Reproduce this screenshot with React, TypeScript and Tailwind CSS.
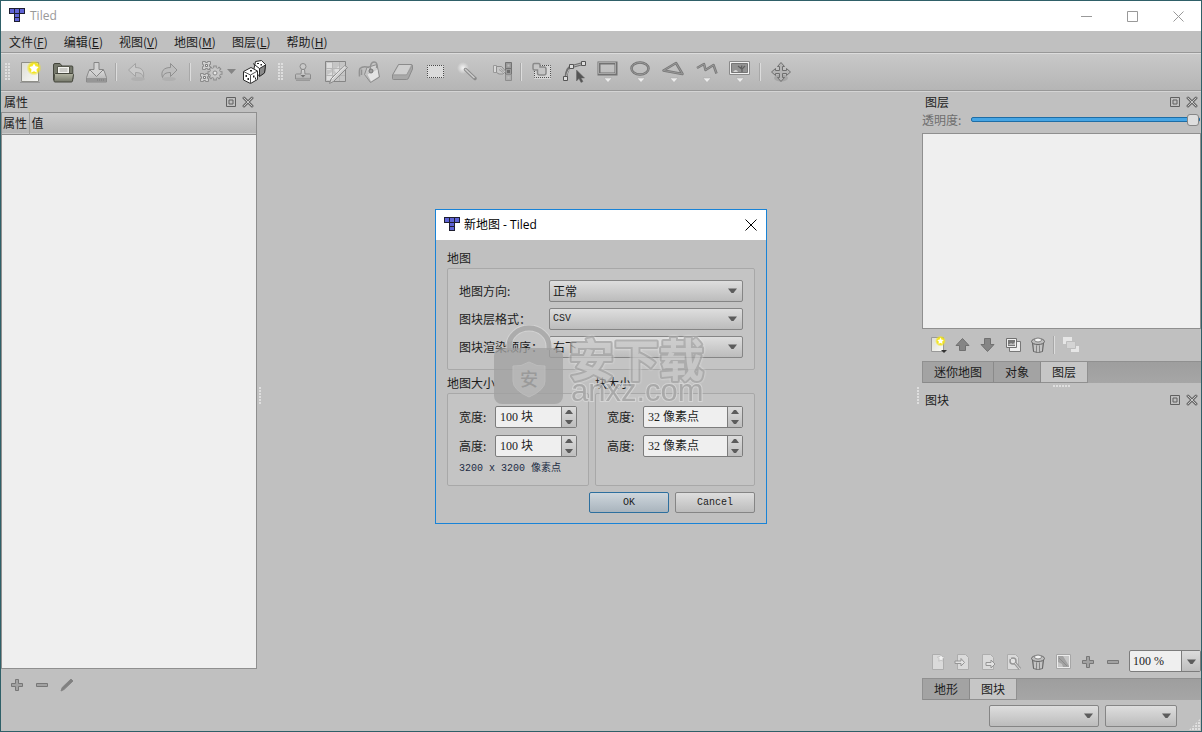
import React from "react";

type IconProps = { children: React.ReactNode; size?: "lg" | "sm" };

const Icon = ({ children, size = "lg" }: IconProps) => (
  <svg
    className={size === "lg" ? "h-6 w-6 shrink-0" : "h-[18px] w-[18px] shrink-0"}
    viewBox={size === "lg" ? "0 0 24 24" : "0 0 18 18"}
    fill="none"
    aria-hidden="true"
  >
    {children}
  </svg>
);

/* shared gradients for all icons */
const Gradients = () => (
  <svg className="absolute h-0 w-0" aria-hidden="true">
    <defs>
      <linearGradient id="paper" x1="0" y1="0" x2="1" y2="1">
        <stop offset="0" stopColor="#dcdcd4" />
        <stop offset="1" stopColor="#fbfbf8" />
      </linearGradient>
      <linearGradient id="folder" x1="0" y1="0" x2="0" y2="1">
        <stop offset="0" stopColor="#b4b6a4" />
        <stop offset="1" stopColor="#74776a" />
      </linearGradient>
      <linearGradient id="metal" x1="0" y1="0" x2="0" y2="1">
        <stop offset="0" stopColor="#dadada" />
        <stop offset="1" stopColor="#adadad" />
      </linearGradient>
      <radialGradient id="glow">
        <stop offset="0" stopColor="#fff45a" />
        <stop offset="0.6" stopColor="#f3e51c" />
        <stop offset="1" stopColor="#f3e51c" stopOpacity="0" />
      </radialGradient>
      <radialGradient id="shine">
        <stop offset="0" stopColor="#f4f4f4" />
        <stop offset="1" stopColor="#f4f4f4" stopOpacity="0" />
      </radialGradient>
    </defs>
  </svg>
);

const Logo = () => (
  <svg className="h-4 w-4 shrink-0" viewBox="0 0 16 16" aria-hidden="true">
    <path d="M0 0h16v6h-5v8H5V6H0z" fill="#1e1e30" />
    <path
      d="M1 1h4v4H1zM6 1h4v4H6zM11 1h4v4h-4zM6 6h4v3H6zM6 10h4v3H6z"
      fill="#5f64d6"
    />
  </svg>
);

const Arrow = () => (
  <svg className="h-[5px] w-[9px]" viewBox="0 0 9 5" aria-hidden="true">
    <path d="M0 .5h9L5.500 5h-2z" fill="#5c5c5c" />
  </svg>
);

const NewMap = () => (
  <Icon>
    <path d="M3.500 2.500h17v19h-17z" fill="url(#paper)" stroke="#8e8e88" />
    <path d="M2 22.500h20" stroke="#9a9a9a" />
    <circle cx="16" cy="8" r="7.500" fill="url(#glow)" />
    <path
      d="M16 3.500l1.500 2.800 3.200.6-2.200 2.400.4 3.200-2.900-1.300-2.900 1.300.4-3.200-2.200-2.400 3.200-.6z"
      fill="#fff"
    />
  </Icon>
);

const OpenFile = () => (
  <Icon>
    <path d="M2.500 20V5q0-1.500 1.500-1.500h5L11 6h10q.8 0 .8 1v12z" fill="#75786b" stroke="#44463c" />
    <path d="M6.500 6.500h12v10h-12z" fill="#f2f2ee" stroke="#55574c" />
    <path d="M8.500 9h8M8.500 11h8" stroke="#a4a4a0" />
    <path d="M4.500 13.500h17l1 1-1 6.500q-.2 1-1.200 1H4q-1 0-1-1l.5-6.500z" fill="url(#folder)" stroke="#44463c" />
  </Icon>
);

const SaveFile = () => (
  <Icon>
    <path d="M5 10.500h15l2.500 7v4.500h-20v-4.500z" fill="url(#metal)" stroke="#8a8a8a" />
    <path d="M3 18h19v4H3z" fill="#969696" />
    <path d="M13 20h8" stroke="#7a7a7a" strokeDasharray="1 1" />
    <path d="M10 2.500h5v7h4.500l-7 7-7-7H10z" fill="#d2d2d2" stroke="#858585" />
  </Icon>
);

const Undo = () => (
  <Icon>
    <ellipse cx="13" cy="19" rx="7" ry="2" fill="#b0b0b0" />
    <path d="M10.500 3.500v4c6 0 9 3 8 10-1-3.500-3-5-8-5v4l-7-6.500z" fill="#c9c9c9" stroke="#a2a2a2" strokeLinejoin="round" />
  </Icon>
);

const Redo = () => (
  <Icon>
    <ellipse cx="11" cy="19" rx="7" ry="2" fill="#b0b0b0" />
    <path d="M12.500 3.500v4c-7 0-10 4-8 10 1-3.500 3-5 8-5v4l6.500-6.500z" fill="#bdbdbd" stroke="#909090" strokeLinejoin="round" />
  </Icon>
);

const Gears = () => (
  <Icon>
    <path d="M3.500 1.500h3v1h2v-1h3v3h-1v2h1v3h-3v-1h-2v1h-3v-3h1v-2h-1z" fill="#cfcfcf" stroke="#8b8b8b" />
    <path d="M1.500 13.500h3v1h2v-1h3v3h-1v2h1v3h-3v-1h-2v1h-3v-3h1v-2h-1z" fill="#cfcfcf" stroke="#8b8b8b" />
    <path d="M6.500 4.500h2v2h-2zM4.500 16.500h2v2h-2z" fill="#f4f4f4" stroke="#7b7b7b" />
    <path d="M16 5.500v15M8.500 13h15M10.700 7.700l10.600 10.600M21.300 7.700L10.700 18.300" stroke="#8b8b8b" strokeWidth="3.500" />
    <path d="M16 6.500v13M9.500 13h13M11.500 8.500l9 9M20.500 8.500l-9 9" stroke="#cacaca" strokeWidth="1.500" />
    <circle cx="16" cy="13" r="5" fill="#c6c6c6" />
    <circle cx="16" cy="13" r="2" fill="#e6e6e6" stroke="#8a8a8a" />
  </Icon>
);

const Dice = () => (
  <Icon>
    <path d="M13.500 1.500l6-1 4 4-1 8-5 3.500-6-5z" fill="#fff" stroke="#2b2b2b" />
    <path d="M17.500 8.500l6-3.500-1 8-5 3.500z" fill="#8a8a8a" stroke="#2b2b2b" />
    <path d="M11 3.500l6.500 5" stroke="#2b2b2b" />
    <path d="M1.500 11.500L9 7.500l6.500 3.500v8.500l-7 4-7-3.500z" fill="#fff" stroke="#2b2b2b" strokeLinejoin="round" />
    <path d="M1.500 11.500l7 3.500 7-4M8.500 15v8.500" stroke="#555" />
    <path d="M8 10h2v1.500H8zM3.500 15H5v2H3.500zM5.500 18H7v2H5.500zM11 15.500h1.500v2H11zM13 17.500h1v2h-1zM15 3h2v1h-2zM18.500 4h1.500v1.500h-1.500z" fill="#222" />
  </Icon>
);

const Stamp = () => (
  <Icon>
    <circle cx="12" cy="6.500" r="3" fill="#c9c9c9" stroke="#8b8b8b" />
    <path d="M10.500 9.500h3l.5 4.500h4.500q1 0 1 1v4H4.500v-4q0-1 1-1H10z" fill="url(#metal)" stroke="#8b8b8b" />
    <path d="M9.500 15h5L12 17.500z" fill="#747474" />
    <path d="M5 20.500h14" stroke="#999" />
  </Icon>
);

const Terrain = () => (
  <Icon>
    <path d="M1.500 1.500h20v20h-20z" fill="#c5c5c5" stroke="#858585" />
    <path d="M3 3h6v5l-3 2H3zM10 10l5-4 3 3-5 5zM3 15l5-3 4 5-4 3H3z" fill="#dedede" />
    <path d="M8.500 2v19M15.500 2v19M2 8.500h19M2 15.500h19" stroke="#b6b6b6" />
    <path d="M21 5.500l2.500 2L9.500 21.500l-4 2 1.500-4.500z" fill="#cfcfcf" stroke="#8b8b8b" />
    <path d="M8 19L21 6.500" stroke="#f0f0f0" />
  </Icon>
);

const Bucket = () => (
  <Icon>
    <path d="M10 7.500L20 4.500 22.500 17l-9 5.500-6-8z" fill="url(#metal)" stroke="#8d8d8d" strokeLinejoin="round" />
    <path d="M10.500 14.500l10-5 1 7-7.500 5z" fill="#e4e4e4" />
    <path d="M13 11q0-9 4-9t2.500 6M12 7.500q-6-2-9 1-1 1-.5 8M4.500 9.500V15" stroke="#929292" strokeWidth="1.500" />
    <circle cx="14" cy="11" r="2" fill="#a0a0a0" stroke="#767676" />
  </Icon>
);

const Eraser = () => (
  <Icon>
    <path d="M8.500 4.500h12.500q1.500 0 1.500 1.500v3l-4 9q-.5 1.500-2 1.500H3.500q-1 0-1-1V15z" fill="#a8a8a8" stroke="#8b8b8b" />
    <path d="M9 5h12l-4.500 9.500H3.500z" fill="#cfcfcf" />
    <path d="M3 15h13.500l5.500-9" stroke="#9b9b9b" />
  </Icon>
);

const RectSelect = () => (
  <Icon>
    <path d="M4 5h17v13H4z" fill="#dbdbdb" />
    <path d="M4.500 5.500h16v12h-16z" stroke="#4a4a4a" strokeDasharray="1 1" strokeDashoffset=".5" />
  </Icon>
);

const Wand = () => (
  <Icon>
    <circle cx="7" cy="8" r="6" fill="url(#shine)" />
    <path d="M9.500 9.500L19 18.500" stroke="#8a8a8a" strokeWidth="3.500" strokeLinecap="round" />
    <path d="M9 9l9.500 9" stroke="#cecece" strokeWidth="1.500" />
  </Icon>
);

const SameTile = () => (
  <Icon>
    <path d="M16.500 2.500h6v6h-6zM16.500 8.500h6v6h-6z" fill="#9a9a9a" stroke="#737373" />
    <path d="M16.500 14.500h6v6h-6z" fill="#acacac" stroke="#8d8d8d" />
    <path d="M18.500 4.500h2v2h-2zM18.500 16.500h2v2h-2z" fill="#bdbdbd" />
    <path d="M18 10h3v3h-3z" fill="#6c6c6c" />
    <path d="M4.500 5.500h3v7h-3z" fill="#d8d8d8" stroke="#999" />
    <path d="M7.500 6.500h5l4 4.500q.5 1.500-1 1.500l-1.500 1.500h-4l-2.500-1.500z" fill="#c7c7c7" stroke="#8e8e8e" />
    <path d="M10 9.500l4 3M11.500 8.500l3.500 3" stroke="#9c9c9c" />
  </Icon>
);

const SelectObjects = () => (
  <Icon>
    <path d="M4 5h17v14H4z" fill="#d6d6d6" />
    <path d="M4.500 5.500h16v12h-16z" stroke="#4f4f4f" strokeDasharray="1 1" strokeDashoffset=".5" />
    <path d="M4.500 3.500h4q1.500 0 1.500 1.500v2h4q2 0 2 2v4q0 2-2 2H9.500q-2 0-2-2v-3h-3q-1.500 0-1.500-1.500V5q0-1.500 1.500-1.500z" fill="#c5c5c5" stroke="#8a8a8a" strokeWidth="1.500" />
  </Icon>
);

const EditPolygons = () => (
  <Icon>
    <path d="M3 18.500Q3 8 9 6.500L20 3.500" stroke="#717171" strokeWidth="3" />
    <path d="M3 18.500Q4 10 9 6.500L20 3.500" stroke="#b5b5b5" />
    <path d="M.5 16.500h4v4h-4zM6.500 4.500h4v4h-4zM18.500 1.500h4v4h-4z" fill="#ddd" stroke="#555" />
    <path d="M13.500 10v11l2.500-2.500 2 4 2-1-2-3.500h3.500z" fill="#555" stroke="#666" strokeWidth=".5" />
  </Icon>
);

const ShapeBadge = () => (
  <path d="M8 18h8l-4 4.500z" fill="#ececec" stroke="#a6a6a6" strokeWidth=".5" />
);

const InsertRectangle = () => (
  <Icon>
    <path d="M3 3h17v11H3z" stroke="#727272" strokeWidth="3" />
    <path d="M2.500 2.500h17v11h-17z" stroke="#a6a6a6" />
    <ShapeBadge />
  </Icon>
);

const InsertEllipse = () => (
  <Icon>
    <ellipse cx="11" cy="8.500" rx="8.500" ry="6" stroke="#727272" strokeWidth="2.500" />
    <ellipse cx="11" cy="8.500" rx="8.500" ry="6" stroke="#9a9a9a" />
    <ShapeBadge />
  </Icon>
);

const InsertPolygon = () => (
  <Icon>
    <path d="M1.500 10.500L14 3l6.500 11z" stroke="#777" strokeWidth="2.500" strokeLinejoin="round" />
    <path d="M1.500 10.500L14 3l6.500 11z" stroke="#a0a0a0" strokeWidth=".8" />
    <ShapeBadge />
  </Icon>
);

const InsertPolyline = () => (
  <Icon>
    <path d="M2 8l7-4 1.500 6 8-5 3 8.500" stroke="#777" strokeWidth="2.500" strokeLinejoin="round" />
    <path d="M2 8l7-4 1.500 6 8-5 3 8.500" stroke="#a0a0a0" strokeWidth=".8" />
    <ShapeBadge />
  </Icon>
);

const InsertTile = () => (
  <Icon>
    <path d="M1.500 1.500h20v13h-20z" fill="#f2f2f2" stroke="#8a8a8a" />
    <path d="M3.500 3.500h16v9h-16z" fill="#939393" stroke="#777" />
    <path d="M5 12q3-4 5 0z" fill="#d6d6d6" />
    <path d="M10 6l3 2.500 1-3M17 6l-3 3v3" stroke="#5f5f5f" strokeWidth="1.200" />
    <ShapeBadge />
  </Icon>
);

const MoveLayers = () => (
  <Icon>
    <ellipse cx="12" cy="18" rx="7" ry="3.500" fill="#a6a6a6" />
    <path
      d="M12 2.500l3.500 4h-2v4h4v-2l4 3.500-4 3.500v-2h-4v4h2L12 21.500l-3.500-4h2v-4h-4v2L2.500 12l4-3.500v2h4v-4h-2z"
      fill="#b4b4b4"
      stroke="#6f6f6f"
      strokeLinejoin="round"
    />
  </Icon>
);

/* small dock icons */

const NewLayer = () => (
  <Icon size="sm">
    <path d="M2.500 1.500h12v14h-12z" fill="url(#paper)" stroke="#999" />
    <circle cx="11.500" cy="5" r="5.500" fill="url(#glow)" />
    <path d="M11.500 1.500l1 2.200 2.300.3-1.700 1.600.4 2.300-2-1.100-2 1.100.4-2.300L8.200 4l2.300-.3z" fill="#fff" />
    <path d="M12 14h6l-3 3z" fill="#333" />
  </Icon>
);

const Raise = () => (
  <Icon size="sm">
    <path d="M8.500 2.500l6.500 7h-3.500v5h-6v-5H2z" fill="#858585" stroke="#707070" strokeLinejoin="round" />
  </Icon>
);

const Lower = () => (
  <Icon size="sm">
    <path d="M8.500 15.500L15 8.500h-3.500v-6h-6v6H2z" fill="#858585" stroke="#707070" strokeLinejoin="round" />
  </Icon>
);

const Duplicate = () => (
  <Icon size="sm">
    <path d="M5.500 5.500h11v10h-11z" fill="#eee" stroke="#777" />
    <path d="M2.500 2.500h10v9h-10z" fill="#efefef" stroke="#707070" />
    <path d="M4 4h7v6H4z" fill="#777" />
    <path d="M4 9l3-2 2 1 2-2v3z" fill="#bbb" />
  </Icon>
);

const Trash = () => (
  <Icon size="sm">
    <path d="M3.500 6.500h11l-1 9q-4.500 2-9 0z" fill="#b0b0b0" stroke="#5c5c5c" />
    <path d="M6 9v6.500M9 9.500v7M12 9v6.500" stroke="#d8d8d8" />
    <path d="M7.500 9.500v6.500M10.500 9.500v6.500" stroke="#858585" />
    <ellipse cx="9" cy="5.500" rx="6.500" ry="3" fill="#bdbdbd" stroke="#666" />
    <ellipse cx="9" cy="4" rx="3.500" ry="2" fill="#f4f4f4" stroke="#808080" />
  </Icon>
);

const HighlightLayer = () => (
  <Icon size="sm">
    <path d="M1 1h9v7H1zM9 10h8v6H9z" fill="#e6e6e6" />
    <path d="M4.500 5.500h9v7h-9z" fill="#d4d4d4" stroke="#bdbdbd" />
  </Icon>
);

const Page = () => (
  <path d="M3.500 1.500h8l3 3v12h-11z" fill="#dadada" stroke="#adadad" />
);

const NewTileset = () => (
  <Icon size="sm">
    <Page />
    <path d="M12 1.500l1.200 2.200 2.300.3-1.700 1.800.4 2.400-2.200-1.100-2.200 1.100.4-2.400L8.500 4l2.300-.3z" fill="#f2f2f2" stroke="#b0b0b0" strokeWidth=".6" />
  </Icon>
);

const ImportTileset = () => (
  <Icon size="sm">
    <Page />
    <path d="M1 8h6V5.500L10.500 9.500 7 13v-2.500H1z" fill="#e2e2e2" stroke="#959595" />
  </Icon>
);

const ExportTileset = () => (
  <Icon size="sm">
    <Page />
    <path d="M7 9.500h5V7l4 4-4 4v-2.500H7z" fill="#e2e2e2" stroke="#959595" />
  </Icon>
);

const TilesetProperties = () => (
  <Icon size="sm">
    <Page />
    <circle cx="9" cy="8" r="3" stroke="#969696" strokeWidth="1.500" fill="#e4e4e4" />
    <path d="M11 10l5 6" stroke="#999" strokeWidth="3" />
    <path d="M11 10l5 6M6 5l3 3" stroke="#ddd" />
  </Icon>
);

const EditTerrain = () => (
  <Icon size="sm">
    <path d="M2.500 1.500h14v14h-14z" fill="#ececec" stroke="#a6a6a6" />
    <path d="M4 3h11v11H4z" fill="#a2a2a2" />
    <path d="M9 3h6v10zM4 9l4 2 1 3H4z" fill="#c6c6c6" />
    <path d="M5 5l8 8" stroke="#8c8c8c" />
  </Icon>
);

const Plus = () => (
  <Icon size="sm">
    <path d="M7.500 3.500h3v4h4v3h-4v4h-3v-4h-4v-3h4z" fill="#a2a2a2" stroke="#777" strokeLinejoin="round" />
  </Icon>
);

const Minus = () => (
  <Icon size="sm">
    <path d="M3.500 7.500h11v3h-11z" fill="#a2a2a2" stroke="#777" strokeLinejoin="round" />
  </Icon>
);

const Pencil = () => (
  <Icon size="sm">
    <path d="M13 3l2 2-9 8.500L3 15l1.200-3.500z" fill="#808080" stroke="#858585" strokeLinejoin="round" />
  </Icon>
);

type Tool = { label: string; icon: React.FC };

const fileTools: Tool[] = [
  { label: "新建", icon: NewMap },
  { label: "打开", icon: OpenFile },
  { label: "保存", icon: SaveFile },
];

const historyTools: Tool[] = [
  { label: "撤销", icon: Undo },
  { label: "重做", icon: Redo },
];

const tileTools: Tool[] = [
  { label: "图章刷", icon: Stamp },
  { label: "地形刷", icon: Terrain },
  { label: "填充", icon: Bucket },
  { label: "橡皮", icon: Eraser },
  { label: "矩形选择", icon: RectSelect },
  { label: "魔棒", icon: Wand },
  { label: "选择相同图块", icon: SameTile },
];

const objectTools: Tool[] = [
  { label: "选择对象", icon: SelectObjects },
  { label: "编辑多边形", icon: EditPolygons },
  { label: "插入矩形", icon: InsertRectangle },
  { label: "插入椭圆", icon: InsertEllipse },
  { label: "插入多边形", icon: InsertPolygon },
  { label: "插入折线", icon: InsertPolyline },
  { label: "插入图块", icon: InsertTile },
];

const layerTools: Tool[] = [
  { label: "新建图层", icon: NewLayer },
  { label: "上移图层", icon: Raise },
  { label: "下移图层", icon: Lower },
  { label: "复制图层", icon: Duplicate },
  { label: "删除图层", icon: Trash },
];

const tilesetTools: Tool[] = [
  { label: "新图块集", icon: NewTileset },
  { label: "导入图块集", icon: ImportTileset },
  { label: "导出图块集", icon: ExportTileset },
  { label: "图块集属性", icon: TilesetProperties },
  { label: "移除图块集", icon: Trash },
  { label: "编辑地形", icon: EditTerrain },
  { label: "添加图块", icon: Plus },
  { label: "移除图块", icon: Minus },
];

const propertyTools: Tool[] = [
  { label: "添加属性", icon: Plus },
  { label: "移除属性", icon: Minus },
  { label: "重命名属性", icon: Pencil },
];

const menus = [
  ["文件", "F"],
  ["编辑", "E"],
  ["视图", "V"],
  ["地图", "M"],
  ["图层", "L"],
  ["帮助", "H"],
];

const Tools = ({ items }: { items: Tool[] }) => (
  <>
    {items.map(({ label, icon: ToolIcon }) => (
      <button key={label} aria-label={label} className="flex w-[33px] items-center justify-center">
        <ToolIcon />
      </button>
    ))}
  </>
);

const DockTools = ({ items }: { items: Tool[] }) => (
  <>
    {items.map(({ label, icon: ToolIcon }) => (
      <button key={label} aria-label={label} className="flex w-[25px] items-center justify-center">
        <ToolIcon />
      </button>
    ))}
  </>
);

const Separator = () => (
  <div className="flex w-2 justify-center">
    <div className="h-[18px] w-[2px] border-l border-[#a8a8a8] bg-[#dcdcdc]" />
  </div>
);

const ToolbarGrip = () => (
  <div className="w-2">
    <div className="h-[18px] w-[6px] bg-[radial-gradient(circle_at_1px_1px,#dedede_1px,transparent_1px)] bg-[length:3px_3px]" />
  </div>
);

const DockGrip = () => (
  <div className="h-[18px] w-[3px] bg-[radial-gradient(circle_at_1px_1px,#dedede_1px,transparent_1px)] bg-[length:3px_3px]" />
);

const DockTitle = ({ title }: { title: string }) => (
  <div className="flex h-[21px] shrink-0 items-center justify-between pr-[3px] pl-[3px]">
    <h2>{title}</h2>
    <div className="flex gap-[5px]">
      <button aria-label="浮动">
        <svg className="h-3 w-3" viewBox="0 0 12 12" fill="none" stroke="#606060">
          <path d="M1.500 1.500h9v9h-9zM4 4h4v4H4z" />
        </svg>
      </button>
      <button aria-label="关闭">
        <svg className="h-3 w-3" viewBox="0 0 12 12" fill="none" strokeLinecap="round">
          <path d="M2 2l8 8M10 2l-8 8" stroke="#6a6a6a" strokeWidth="3" />
          <path d="M2 2l8 8M10 2l-8 8" stroke="#c8c8c8" />
        </svg>
      </button>
    </div>
  </div>
);

const Tabs = ({ items, active }: { items: string[]; active: string }) => (
  <div
    role="tablist"
    className="flex h-[22px] shrink-0 border-t border-l border-[#909090] bg-linear-to-b from-[#9e9e9e] to-[#a6a6a6]"
  >
    {items.map((item) => (
      <button
        key={item}
        role="tab"
        aria-selected={item === active}
        className={
          item === active
            ? "border-r border-b border-[#909090] bg-[#c6c6c6] px-[11px]"
            : "border-r border-b border-[#8a8a8a] bg-[#a3a3a3] px-[11px]"
        }
      >
        {item}
      </button>
    ))}
  </div>
);

type SelectProps = { id: string; label?: string; options: string[]; mono?: boolean };

const Select = ({ id, label, options, mono }: SelectProps) => (
  <div className="relative min-w-0 flex-1">
    <select
      id={id}
      aria-label={label}
      className={
        mono
          ? "block h-[22px] w-full appearance-none rounded-[2px] border border-[#858585] bg-linear-to-b from-[#dedede] to-[#bcbcbc] pl-[3px] font-['Liberation_Mono',monospace] text-[10px]"
          : "block h-[22px] w-full appearance-none rounded-[2px] border border-[#858585] bg-linear-to-b from-[#dedede] to-[#bcbcbc] pl-[3px]"
      }
    >
      {options.map((option) => (
        <option key={option}>{option}</option>
      ))}
    </select>
    <span className="pointer-events-none absolute inset-y-0 right-[6px] flex items-center">
      <Arrow />
    </span>
  </div>
);

const SpinBox = ({ id, value }: { id: string; value: string }) => (
  <div className="flex h-[22px] min-w-0 flex-1 overflow-hidden rounded-[2px] border border-[#7c7c7c] bg-[#efefef]">
    <input
      id={id}
      defaultValue={value}
      className="w-0 min-w-0 flex-1 bg-transparent pl-1 font-['Liberation_Serif','Noto_Sans_CJK_SC',serif]"
    />
    <div className="flex w-[15px] flex-col border-l border-[#7c7c7c] bg-linear-to-b from-[#dcdcdc] to-[#bebebe]">
      <button type="button" aria-label="增加" className="flex flex-1 items-center justify-center">
        <svg className="h-1 w-2" viewBox="0 0 8 4">
          <path d="M0 4h8L5 0H3z" fill="#5c5c5c" />
        </svg>
      </button>
      <button type="button" aria-label="减少" className="flex flex-1 items-center justify-center">
        <svg className="h-1 w-2" viewBox="0 0 8 4">
          <path d="M0 0h8L5 4H3z" fill="#5c5c5c" />
        </svg>
      </button>
    </div>
  </div>
);

const Watermark = () => (
  <svg
    className="pointer-events-none absolute top-[115px] left-[58px] h-[84px] w-[216px]"
    viewBox="0 0 216 84"
    aria-hidden="true"
  >
    <path d="M15 25V21a20 18 0 0 1 40 0v4" fill="none" stroke="#d8d8d8" strokeWidth="7" opacity=".7" />
    <path d="M15 25V21a20 18 0 0 1 40 0v4" fill="none" stroke="#a2a2a2" strokeWidth="5" opacity=".8" />
    <rect y="23" width="69" height="56" rx="8" fill="#a0a0a0" opacity=".75" />
    <path d="M35 37q8 5 16 4v15q0 9-16 16-16-7-16-16V41q8 1 16-4z" fill="#bcbcbc" stroke="#c4c4c4" opacity=".7" />
    <text x="26" y="61" fontSize="18" fontWeight="500" fill="#9a9a9a" fontFamily="Noto Sans CJK SC, sans-serif">
      安
    </text>
    <text
      x="75"
      y="52"
      className="drop-shadow-[0_0_1px_#f0f0f0]"
      fontFamily="Noto Sans CJK SC, sans-serif"
      fontSize="45"
      fontWeight="bold"
      fill="#c9c9c9"
      stroke="#a4a4a4"
      strokeWidth="4"
      strokeLinejoin="round"
      paintOrder="stroke"
      opacity=".75"
    >
      安下载
    </text>
    <text
      x="77"
      y="76"
      fontFamily="Liberation Sans, sans-serif"
      fontSize="31"
      fill="#a6a6a6"
      stroke="#d8d8d8"
      strokeWidth="2"
      paintOrder="stroke"
      opacity=".85"
    >
      anxz.com
    </text>
  </svg>
);

const NewMapDialog = () => (
  <div
    role="dialog"
    aria-label="新地图"
    className="relative w-[332px] border border-[#1883d7] bg-[#c0c0c0]"
  >
    <div className="flex h-[30px] items-center bg-white pr-[9px] pl-2 font-['Open_Sans','Noto_Sans_CJK_SC',sans-serif] text-black">
      <Logo />
      <h1 className="ml-1 flex-1">新地图 - Tiled</h1>
      <button aria-label="关闭">
        <svg className="h-3 w-3" viewBox="0 0 12 12" stroke="#000">
          <path d="M.5.5l11 11M11.500.5l-11 11" />
        </svg>
      </button>
    </div>
    <form className="px-[11px] pt-2 pb-[10px]" onSubmit={(e) => e.preventDefault()}>
      <h2 className="h-5 leading-5">地图</h2>
      <div className="flex flex-col gap-[6px] rounded-[2px] border border-[#a8a8a8] bg-[#c4c4c4] p-[11px]">
        <div className="flex items-center">
          <label htmlFor="orientation" className="w-[90px]">地图方向:</label>
          <Select id="orientation" options={["正常", "45度", "45度交错", "六角交错"]} />
        </div>
        <div className="flex items-center">
          <label htmlFor="format" className="w-[90px]">图块层格式：</label>
          <Select id="format" options={["CSV", "XML"]} mono />
        </div>
        <div className="flex items-center">
          <label htmlFor="order" className="w-[90px]">图块渲染顺序：</label>
          <Select id="order" options={["右下", "右上", "左下", "左上"]} />
        </div>
      </div>
      <div className="mt-[3px] flex gap-[6px]">
        <section className="flex w-[142px] flex-col">
          <h2 className="h-5 leading-5">地图大小</h2>
          <div className="h-[93px] rounded-[2px] border border-[#a8a8a8] bg-[#c4c4c4] px-[11px] pt-3">
            <div className="flex items-center">
              <label htmlFor="map-width" className="w-9">宽度:</label>
              <SpinBox id="map-width" value="100 块" />
            </div>
            <div className="mt-[7px] flex items-center">
              <label htmlFor="map-height" className="w-9">高度:</label>
              <SpinBox id="map-height" value="100 块" />
            </div>
            <p className="mt-1 font-['Liberation_Mono','Noto_Sans_CJK_SC',monospace] text-[10px] leading-4 whitespace-nowrap text-[#1c2c44]">
              3200 x 3200 像素点
            </p>
          </div>
        </section>
        <section className="flex flex-1 flex-col">
          <h2 className="h-5 leading-5">块大小</h2>
          <div className="h-[93px] rounded-[2px] border border-[#a8a8a8] bg-[#c4c4c4] px-[11px] pt-3">
            <div className="flex items-center">
              <label htmlFor="tile-width" className="w-9">宽度:</label>
              <SpinBox id="tile-width" value="32 像素点" />
            </div>
            <div className="mt-[7px] flex items-center">
              <label htmlFor="tile-height" className="w-9">高度:</label>
              <SpinBox id="tile-height" value="32 像素点" />
            </div>
          </div>
        </section>
      </div>
      <div className="mt-[6px] flex justify-end gap-[6px] font-['Liberation_Mono',monospace] text-[10px]">
        <button
          type="submit"
          className="h-[21px] w-20 rounded-[2px] border border-[#2d6f9e] bg-linear-to-b from-[#ced6dc] to-[#a9b4bd] pt-px"
        >
          OK
        </button>
        <button
          type="button"
          className="h-[21px] w-20 rounded-[2px] border border-[#858585] bg-linear-to-b from-[#dedede] to-[#bcbcbc] pt-px"
        >
          Cancel
        </button>
      </div>
    </form>
    <Watermark />
  </div>
);

const PropertiesDock = () => (
  <aside className="flex w-64 shrink-0 flex-col">
    <DockTitle title="属性" />
    <div className="flex-1 border border-[#8f8f8f] bg-[#efefef]">
      <table className="w-full border-collapse">
        <thead>
          <tr className="h-[21px] border-b border-[#8f8f8f] bg-linear-to-b from-[#cbcbcb] to-[#b7b7b7] text-left">
            <th className="w-[27px] border-r border-[#9c9c9c] pl-px font-normal whitespace-nowrap">属性</th>
            <th className="pl-[2px] font-normal">值</th>
          </tr>
        </thead>
      </table>
    </div>
    <div className="flex h-[31px] pl-[3px]">
      <DockTools items={propertyTools} />
    </div>
  </aside>
);

const RightDocks = () => (
  <aside className="flex w-[279px] shrink-0 flex-col">
    <DockTitle title="图层" />
    <div className="flex h-[15px] items-center gap-[6px] pr-px text-[#6e6e6e]">
      <label htmlFor="opacity" className="w-[43px] whitespace-nowrap">透明度:</label>
      <input
        id="opacity"
        type="range"
        defaultValue="100"
        className="h-[5px] min-w-0 flex-1 appearance-none rounded-[2px] border border-[#1f6da5] bg-[#46a5e4] [&::-webkit-slider-thumb]:h-3 [&::-webkit-slider-thumb]:w-3 [&::-webkit-slider-thumb]:appearance-none [&::-webkit-slider-thumb]:rounded-[3px] [&::-webkit-slider-thumb]:border [&::-webkit-slider-thumb]:border-[#868686] [&::-webkit-slider-thumb]:bg-[#dedede]"
      />
    </div>
    <div className="mt-[6px] h-[196px] border border-[#8f8f8f] bg-[#efefef]" />
    <div className="flex h-8 items-stretch pl-[3px]">
      <DockTools items={layerTools} />
      <div className="flex items-center">
        <Separator />
      </div>
      <DockTools items={[{ label: "高亮当前图层", icon: HighlightLayer }]} />
    </div>
    <Tabs items={["迷你地图", "对象", "图层"]} active="图层" />
    <div className="flex h-[6px] items-center justify-center">
      <div className="h-[3px] w-[18px] bg-[radial-gradient(circle_at_1px_1px,#dedede_1px,transparent_1px)] bg-[length:3px_3px]" />
    </div>
    <DockTitle title="图块" />
    <div className="flex-1" />
    <div className="mb-1 flex h-[24px] pl-[3px]">
      <DockTools items={tilesetTools} />
      <div className="relative ml-1 flex-1">
        <select
          aria-label="缩放"
          className="block h-[22px] w-full appearance-none rounded-[2px] border border-[#7c7c7c] bg-[#efefef] pl-[3px] font-['Liberation_Serif',serif]"
        >
          <option>100 %</option>
          <option>200 %</option>
        </select>
        <span className="pointer-events-none absolute top-px right-px flex h-5 w-[19px] items-center justify-center border-l border-[#7c7c7c] bg-linear-to-b from-[#dcdcdc] to-[#bebebe]">
          <Arrow />
        </span>
      </div>
    </div>
    <Tabs items={["地形", "图块"]} active="图块" />
  </aside>
);

const App = () => {
  return (
    <div className="relative flex min-h-screen flex-col border border-[#2f6068] bg-[#c0c0c0] font-['Noto_Sans_CJK_SC',sans-serif] text-xs text-[#1c1c1c]">
      <Gradients />
      <header className="flex h-[30px] items-stretch bg-white pl-2 font-['Open_Sans',sans-serif] text-[#999]">
        <div className="flex flex-1 items-center gap-[5px]">
          <Logo />
          <span>Tiled</span>
        </div>
        <button aria-label="最小化" className="flex w-[46px] items-center justify-center">
          <svg className="h-[11px] w-[11px]" viewBox="0 0 11 11" stroke="#999">
            <path d="M0 5.500h11" />
          </svg>
        </button>
        <button aria-label="最大化" className="flex w-[46px] items-center justify-center">
          <svg className="h-[11px] w-[11px]" viewBox="0 0 11 11" fill="none" stroke="#999">
            <path d="M.5.5h10v10H.5z" />
          </svg>
        </button>
        <button aria-label="关闭" className="flex w-[46px] items-center justify-center">
          <svg className="h-[11px] w-[11px]" viewBox="0 0 11 11" stroke="#999">
            <path d="M.5.5l10 10M10.500.5l-10 10" />
          </svg>
        </button>
      </header>
      <nav className="flex h-[21px]">
        {menus.map(([name, key]) => (
          <button key={key} className="px-2">
            {name}(<u>{key}</u>)
          </button>
        ))}
      </nav>
      <div
        role="toolbar"
        aria-label="工具"
        className="flex h-[39px] items-center border-y border-[#989898] bg-linear-to-b from-[#c9c9c9] to-[#b5b5b5] pl-1 shadow-[0_1px_0_#d4d4d4] inset-shadow-[0_1px_0_#dcdcdc]"
      >
        <ToolbarGrip />
        <Tools items={fileTools} />
        <Separator />
        <Tools items={historyTools} />
        <Separator />
        <Tools items={[{ label: "命令", icon: Gears }]} />
        <button aria-label="命令菜单" className="w-[10px]">
          <svg className="h-[5px] w-[9px]" viewBox="0 0 9 5">
            <path d="M0 0h9L4.500 5z" fill="#858585" />
          </svg>
        </button>
        <Tools items={[{ label: "随机模式", icon: Dice }]} />
        <div className="ml-2">
          <ToolbarGrip />
        </div>
        <Tools items={tileTools} />
        <Separator />
        <Tools items={objectTools} />
        <Separator />
        <Tools items={[{ label: "移动图层", icon: MoveLayers }]} />
      </div>
      <div className="flex flex-1">
        <PropertiesDock />
        <main className="flex flex-1 items-center justify-between px-[2px]">
          <DockGrip />
          <DockGrip />
        </main>
        <RightDocks />
      </div>
      <footer className="flex h-[31px] items-center justify-end gap-[6px]">
        <div className="flex w-[110px]">
          <Select id="layer-picker" label="当前图层" options={[""]} />
        </div>
        <div className="flex w-[72px]">
          <Select id="zoom-picker" label="缩放比例" options={[""]} />
        </div>
        <div className="mr-px h-3 w-[17px] self-end bg-[radial-gradient(circle_at_1px_1px,#e0e0e0_1px,transparent_1px)] bg-[length:3px_3px] [clip-path:polygon(100%_0,100%_100%,30%_100%)]" />
      </footer>
      <div className="pointer-events-none absolute inset-0 grid place-items-center">
        <div className="pointer-events-auto">
          <NewMapDialog />
        </div>
      </div>
    </div>
  );
};

export default App;
